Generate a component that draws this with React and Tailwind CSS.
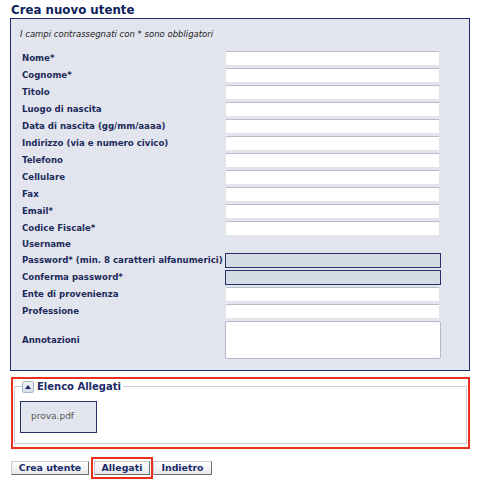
import React from 'react';

const fields = [
  { label: 'Nome*', type: 'text' },
  { label: 'Cognome*', type: 'text' },
  { label: 'Titolo', type: 'text' },
  { label: 'Luogo di nascita', type: 'text' },
  { label: 'Data di nascita (gg/mm/aaaa)', type: 'text' },
  { label: 'Indirizzo (via e numero civico)', type: 'text' },
  { label: 'Telefono', type: 'text' },
  { label: 'Cellulare', type: 'text' },
  { label: 'Fax', type: 'text' },
  { label: 'Email*', type: 'text' },
  { label: 'Codice Fiscale*', type: 'text' },
  { label: 'Username', type: 'none' },
  { label: 'Password* (min. 8 caratteri alfanumerici)', type: 'password' },
  { label: 'Conferma password*', type: 'password' },
  { label: 'Ente di provenienza', type: 'text' },
  { label: 'Professione', type: 'text' },
];

const FieldRow = ({ label, type }) => {
  if (type === 'none') {
    return (
      <div className="flex h-[13px] items-center">
        <span className="w-[203px] text-[8.6px] font-bold text-[#1c2b5a]">{label}</span>
      </div>
    );
  }
  return (
    <div className="flex h-[15px] items-center">
      <span className="w-[203px] whitespace-nowrap text-[8.6px] font-bold text-[#1c2b5a]">{label}</span>
      {type === 'password' ? (
        <div className="h-[15px] w-[216px] border border-[#27306b] bg-[#d5dce4]" />
      ) : (
        <div className="h-[15px] w-[215px] rounded-[2px] border border-[#e2e4ea] border-t-[#b9bdc8] bg-white" />
      )}
    </div>
  );
};

const Button = ({ children, className }) => (
  <button className={`flex h-[14px] shrink-0 items-center justify-center border border-[#c8ccd4] border-b-[#6e6e6e] border-r-[#6e6e6e] bg-gradient-to-b from-white to-[#e6e8ec] text-[9.4px] font-bold leading-none text-[#1a2a66] ${className}`}>
    {children}
  </button>
);

export default function App() {
  return (
    <div className="h-[500px] w-[480px] bg-white font-['DejaVu_Sans',Verdana,sans-serif]">
      <h1 className="pl-[11px] pt-[3px] text-[11.8px] font-bold leading-[15px] text-[#0e1f5c]">Crea nuovo utente</h1>

      <div className="mx-[10px] h-[353px] border border-[#1f2a6b] bg-[#e3e5ee] pl-[11px] pt-[9px]">
        <p className="-ml-[2px] text-[8.5px] italic leading-[12px] text-[#222]">
          I campi contrassegnati con * sono obbligatori
        </p>
        <div className="mt-[11px] flex flex-col gap-[2px]">
          {fields.map((f) => (
            <FieldRow key={f.label} label={f.label} type={f.type} />
          ))}
          <div className="flex h-[38px] items-center">
            <span className="w-[203px] text-[8.6px] font-bold text-[#1c2b5a]">Annotazioni</span>
            <div className="h-[38px] w-[216px] rounded-[2px] border border-[#b6bac8] bg-white" />
          </div>
        </div>
      </div>

      <div className="ml-[11px] mt-[6px] h-[72px] w-[459px] border-2 border-[#e8301e] px-[1px]">
        <fieldset className="h-[65px] border border-[#c8ccd6] px-[5px]">
          <legend className="ml-[2px] flex items-center gap-[3px] pr-[2px]">
            <span className="flex h-[12px] w-[12px] items-center justify-center rounded-[2px] border border-[#a8b4c8] bg-gradient-to-b from-[#f2f5fa] to-[#d6deea]">
              <svg width="6" height="4" viewBox="0 0 6 4">
                <polygon points="0,4 3,0 6,4" fill="#1a2a66" />
              </svg>
            </span>
            <span className="text-[10px] font-bold text-[#1a2a66]">Elenco Allegati</span>
          </legend>
          <div className="mt-[7px] flex h-[32px] w-[77px] items-center border border-[#27306b] bg-[#e3e5ee] pl-[10px]">
            <span className="text-[9px] text-[#555]">prova.pdf</span>
          </div>
        </fieldset>
      </div>

      <div className="ml-[11px] mt-[8px] flex items-center">
        <Button className="w-[78px]">Crea utente</Button>
        <div className="ml-[2px] flex h-[22px] items-center border-2 border-[#e8301e] px-[1px]">
          <Button className="w-[56px]">Allegati</Button>
        </div>
        <Button className="w-[59px]">Indietro</Button>
      </div>
    </div>
  );
}
